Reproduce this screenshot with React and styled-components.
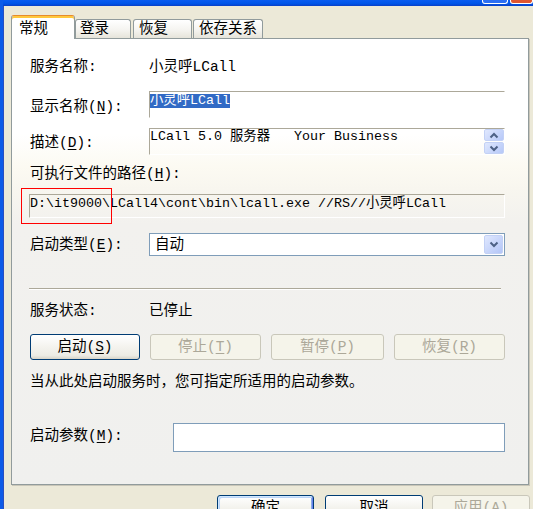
import React from 'react';
import styled, { createGlobalStyle } from 'styled-components';

const FONT = `"Liberation Mono", "Noto Sans CJK SC", monospace`;

const Global = createGlobalStyle`
  html, body { margin: 0; padding: 0; }
  body {
    width: 533px; height: 509px; overflow: hidden;
    background: #ece9d8;
    font-family: ${FONT};
    color: #000;
  }
`;

const Window = styled.div`
  width: 533px;
  height: 509px;
  box-sizing: border-box;
  border-left: 3px solid #0d5be8;
  background: #ece9d8;
  display: flex;
  flex-direction: column;
  overflow: hidden;
`;

const TitleStrip = styled.div`
  height: 6px;
  flex: none;
  background: linear-gradient(#0a5cf0, #0055e8 60%, #0a3fc6);
  display: flex;
  justify-content: flex-end;
  align-items: flex-start;
  gap: 2px;
`;

const TitleBtn = styled.div`
  width: ${(p) => p.$w}px;
  height: 4px;
  box-sizing: border-box;
  border: 1px solid #fff;
  border-top: none;
  border-radius: 0 0 3px 3px;
  background: ${(p) => (p.$red ? '#e0552f' : '#2c6ff3')};
  margin-right: ${(p) => p.$mr || 0}px;
`;

const Body = styled.div`
  flex: 1;
  border-left: 1px solid #2a4fc0;
  padding-top: 9px;
  display: flex;
  flex-direction: column;
`;

const TabRow = styled.div`
  height: 23px;
  display: flex;
  align-items: flex-end;
  padding-left: 7px;
  position: relative;
  z-index: 2;
`;

const Tab = styled.div`
  box-sizing: border-box;
  width: ${(p) => p.$w}px;
  margin-left: ${(p) => p.$ml || 0}px;
  height: 19px;
  border: 1px solid #919b9c;
  border-bottom: none;
  border-radius: 3px 3px 0 0;
  background: linear-gradient(#ffffff, #f5f4f0 55%, #e6e4da);
  padding: 1px 0 0 ${(p) => p.$pl || 4}px;
  font-size: 14.5px;
  line-height: 17px;
  white-space: nowrap;
`;

const ActiveTab = styled(Tab)`
  height: 24px;
  margin-bottom: -1px;
  background: #fff;
  border-top: 1px solid #e68b2c;
  box-shadow: inset 0 2px 0 #ffc83c;
  padding-top: 5px;
  position: relative;
  z-index: 3;
`;

const Panel = styled.div`
  position: relative;
  margin-left: 7px;
  width: 518px;
  height: 447px;
  box-sizing: border-box;
  border: 1px solid #919b9c;
  box-shadow: 1px 1px 0 #c9c6b8;
  background: linear-gradient(
    #ffffff 0px,
    #ffffff 95px,
    #fcfaf2 128px,
    #f8f6ef 150px,
    #f2f1ee 185px,
    #f0f0ee 447px
  );
  padding: 19px 0 0 18px;
  display: flex;
  flex-direction: column;
  font-size: 14.5px;
`;

const Field = styled.div`
  display: grid;
  grid-template-columns: ${(p) => p.$label || 119}px ${(p) => p.$value || 356}px;
  margin-top: ${(p) => p.$mt || 0}px;
`;

const Label = styled.div`
  font-size: 14.5px;
  line-height: 18px;
  padding-top: ${(p) => p.$pt || 0}px;
  white-space: nowrap;
  margin-top: ${(p) => p.$mt || 0}px;
  color: ${(p) => (p.$disabled ? '#aca899' : '#000')};
`;

const Mn = styled.span`
  text-decoration: underline;
  text-underline-offset: 2px;
`;

const Sunken = styled.div`
  box-sizing: border-box;
  height: ${(p) => p.$h}px;
  border-top: 1px solid #aca899;
  border-left: 1px solid #aca899;
  border-right: 1px solid #fff;
  border-bottom: 1px solid #fff;
  font-size: 13.33px;
  white-space: pre;
  overflow: hidden;
`;

const NameBox = styled(Sunken)`
  padding: 1px 0 0 0;
`;

const Selected = styled.span`
  display: inline-block;
  height: 14px;
  line-height: 14px;
  background: #316ac5;
  color: #fff;
`;

const DescBox = styled(Sunken)`
  display: flex;
  justify-content: space-between;
  line-height: 16px;
  padding-right: 0;
`;

const DescText = styled.div`
  padding-top: 0;
`;

const Spinner = styled.div`
  display: flex;
  flex-direction: column;
  gap: 1px;
  margin-right: 0;
`;

const SpinBtn = styled.div`
  width: 20px;
  height: 12px;
  box-sizing: border-box;
  border: 1px solid #c3d1f5;
  border-radius: 2px;
  background: linear-gradient(135deg, #e0e8fe, #b6c8f8);
  display: flex;
  align-items: center;
  justify-content: center;
`;

const PathBox = styled(Sunken)`
  margin-top: 11px;
  margin-left: -1px;
  width: 476px;
  padding-top: 1px;
  line-height: 16px;
`;

const Combo = styled.div`
  box-sizing: border-box;
  height: 23px;
  border: 1px solid #7f9db9;
  background: #fff;
  display: flex;
  align-items: center;
  justify-content: space-between;
  padding: 0 1px 0 5px;
  font-size: 14.5px;
  line-height: 18px;
`;

const DropBtn = styled.div`
  width: 19px;
  height: 19px;
  box-sizing: border-box;
  border: 1px solid #c3d1f5;
  border-radius: 2px;
  background: linear-gradient(135deg, #e0e8fe, #b3c5f7);
  display: flex;
  align-items: center;
  justify-content: center;
`;

const Separator = styled.div`
  margin-top: 32px;
  margin-left: -1px;
  width: 472px;
  height: 1px;
  background: #aca899;
  border-bottom: 1px solid #fff;
`;

const ButtonRow = styled.div`
  margin-top: 14px;
  width: 474px;
  display: grid;
  grid-template-columns: 110px 111px 113px 111px;
  column-gap: 10px;
  justify-content: space-between;
`;

const Button = styled.div`
  box-sizing: border-box;
  height: ${(p) => p.$h || 26}px;
  width: ${(p) => (p.$w ? `${p.$w}px` : 'auto')};
  border: 1px solid ${(p) => (p.$disabled ? '#c9c7ba' : '#003c74')};
  border-radius: 3px;
  background: ${(p) =>
    p.$disabled
      ? '#f5f4ea'
      : 'linear-gradient(#ffffff, #f4f3ee 50%, #ecebe4 85%, #d8d4c8)'};
  color: ${(p) => (p.$disabled ? '#aca899' : '#000')};
  display: flex;
  align-items: center;
  justify-content: center;
  font-size: 14.5px;
  line-height: 18px;
  white-space: nowrap;
  box-shadow: ${(p) =>
    p.$default
      ? 'inset 1px 1px 0 #cee7ff, inset -1px -1px 0 #6982ee, inset 2px 2px 0 #bcd4f6, inset -2px -2px 0 #89ade4'
      : 'none'};
`;

const Note = styled.div`
  margin-top: 13px;
  font-size: 14.5px;
  line-height: 18px;
  white-space: nowrap;
`;

const ParamBox = styled.div`
  box-sizing: border-box;
  height: 29px;
  border: 1px solid #7f9db9;
  background: #fff;
`;

const Annotation = styled.div`
  position: absolute;
  left: 9px;
  top: 149px;
  width: 91px;
  height: 36px;
  box-sizing: border-box;
  border: 1px solid #f00;
  pointer-events: none;
`;

const Footer = styled.div`
  margin-top: 10px;
  display: flex;
  justify-content: flex-end;
  padding-right: 3px;
`;

const FooterBtn = styled(Button)`
  margin-left: ${(p) => p.$ml || 0}px;
`;

const Chevron = ({ up }) => (
  <svg width="10" height="7" viewBox="0 0 10 7">
    <path
      d={up ? 'M1.5 5.5 L5 2 L8.5 5.5' : 'M1.5 1.5 L5 5 L8.5 1.5'}
      fill="none"
      stroke="#4d6185"
      strokeWidth="2"
    />
  </svg>
);

export default function App() {
  return (
    <>
      <Global />
      <Window>
        <TitleStrip>
          <TitleBtn $w={26} />
          <TitleBtn $w={23} $red />
        </TitleStrip>
        <Body>
          <TabRow>
            <ActiveTab $w={64} $pl={7}>常规</ActiveTab>
            <Tab $w={56} $pl={4}>登录</Tab>
            <Tab $w={59} $ml={2} $pl={5}>恢复</Tab>
            <Tab $w={70} $ml={1} $pl={5}>依存关系</Tab>
          </TabRow>
          <Panel>
            <Field>
              <Label>服务名称:</Label>
              <Label>小灵呼LCall</Label>
            </Field>
            <Field $mt={15}>
              <Label $pt={7}>
                显示名称(<Mn>N</Mn>):
              </Label>
              <NameBox $h={27}>
                <Selected>小灵呼LCall</Selected>
              </NameBox>
            </Field>
            <Field $mt={10}>
              <Label $pt={6}>
                描述(<Mn>D</Mn>):
              </Label>
              <DescBox $h={27}>
                <DescText>{'LCall 5.0 服务器   Your Business'}</DescText>
                <Spinner>
                  <SpinBtn>
                    <Chevron up />
                  </SpinBtn>
                  <SpinBtn>
                    <Chevron />
                  </SpinBtn>
                </Spinner>
              </DescBox>
            </Field>
            <Label $mt={10}>
              可执行文件的路径(<Mn>H</Mn>):
            </Label>
            <PathBox $h={24}>{'D:\\it9000\\LCall4\\cont\\bin\\lcall.exe //RS//小灵呼LCall'}</PathBox>
            <Field $mt={15}>
              <Label $pt={3}>
                启动类型(<Mn>E</Mn>):
              </Label>
              <Combo>
                <span>自动</span>
                <DropBtn>
                  <Chevron />
                </DropBtn>
              </Combo>
            </Field>
            <Separator />
            <Field $mt={12}>
              <Label>服务状态:</Label>
              <Label>已停止</Label>
            </Field>
            <ButtonRow>
              <Button>
                启动(<Mn>S</Mn>)
              </Button>
              <Button $disabled>
                停止(<Mn>T</Mn>)
              </Button>
              <Button $disabled>
                暂停(<Mn>P</Mn>)
              </Button>
              <Button $disabled>
                恢复(<Mn>R</Mn>)
              </Button>
            </ButtonRow>
            <Note>当从此处启动服务时，您可指定所适用的启动参数。</Note>
            <Field $mt={32} $label={143} $value={332}>
              <Label $pt={4}>
                启动参数(<Mn>M</Mn>):
              </Label>
              <ParamBox />
            </Field>
            <Annotation />
          </Panel>
          <Footer>
            <FooterBtn $w={97} $h={25} $default>
              确定
            </FooterBtn>
            <FooterBtn $w={98} $h={25} $ml={11}>
              取消
            </FooterBtn>
            <FooterBtn $w={98} $h={25} $ml={9} $disabled>
              应用(<Mn>A</Mn>)
            </FooterBtn>
          </Footer>
        </Body>
      </Window>
    </>
  );
}
